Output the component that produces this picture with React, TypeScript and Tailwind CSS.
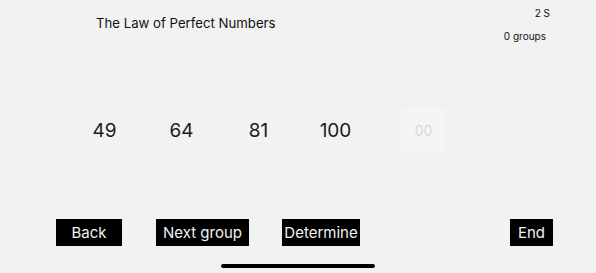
import React from 'react';

const numbers = ['49', '64', '81', '100'];

function ActionButton({ label, className }: { label: string; className?: string }) {
  return (
    <button
      className={`h-[27px] bg-black text-[#f2f2f2] text-[15px] leading-none flex items-center justify-center ${className ?? ''}`}
    >
      {label}
    </button>
  );
}

export default function App() {
  return (
    <div className="w-[596px] h-[273px] bg-[#f2f2f2] flex flex-col font-['Inter',sans-serif] text-[#111]">
      {/* Header */}
      <div className="flex justify-between h-[52px]">
        <div className="pl-[96px] pt-[14px] text-[13.2px] leading-[18px] text-[#111]">
          The Law of Perfect Numbers
        </div>
        <div className="flex flex-col items-end pr-[50px] pt-[7px] text-[10px] leading-[13px]">
          <span className="mr-[-4px]">2 S</span>
          <span className="mt-[10px]">0 groups</span>
        </div>
      </div>

      {/* Numbers */}
      <div className="flex items-center h-[46px] mt-[55px] pl-[66px]">
        {numbers.map((n) => (
          <div key={n} className="w-[77px] text-center text-[19px] leading-none text-[#1a1a1a]">
            {n}
          </div>
        ))}
        <div className="ml-[27px] w-[45px] h-[43px] bg-[#f5f5f5] rounded-[2px] flex items-center justify-center text-[14px] text-[#d8d8d8]">
          00
        </div>
      </div>

      {/* Buttons */}
      <div className="flex items-center mt-[66px] pl-[56px]">
        <ActionButton label="Back" className="w-[66px]" />
        <ActionButton label="Next group" className="w-[93px] ml-[34px]" />
        <ActionButton label="Determine" className="w-[78px] ml-[33px]" />
        <ActionButton label="End" className="w-[43px] ml-[150px]" />
      </div>

      {/* Home indicator */}
      <div className="flex justify-center mt-[18px]">
        <div className="w-[154px] h-[4px] rounded-full bg-black" />
      </div>
    </div>
  );
}
